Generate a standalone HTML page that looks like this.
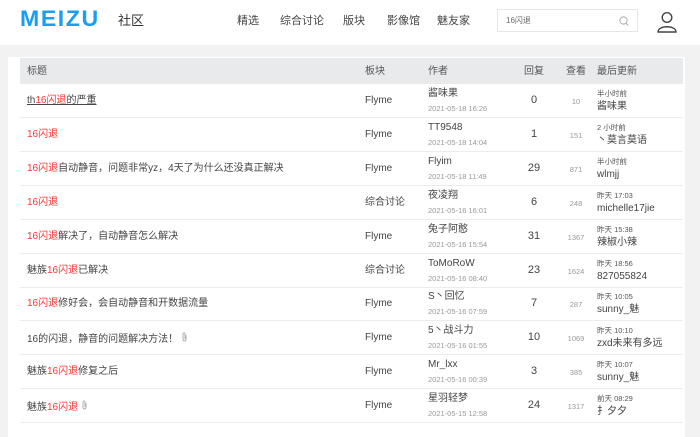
<!DOCTYPE html>
<html><head><meta charset="utf-8">
<style>
*{margin:0;padding:0;box-sizing:border-box}
body{width:700px;height:427px;overflow:hidden;background:#f2f2f2;font-family:"Liberation Sans","Noto Sans CJK SC",sans-serif;color:#333;position:relative;line-height:1.2}
.hd{position:absolute;left:0;top:0;width:700px;height:45px;background:#fff}
.logo{position:absolute;left:20px;top:8px;font-size:22px;line-height:22px;font-weight:bold;color:#1a9ef2;letter-spacing:1.5px;font-family:"Liberation Sans",sans-serif;transform:scaleX(1.05);transform-origin:left}
.she{position:absolute;left:118px;top:13px;font-size:13px;line-height:16px;color:#333}
.nav{position:absolute;top:14px;font-size:11px;line-height:14px;color:#444}
.search{position:absolute;left:497px;top:9px;width:141px;height:23px;border:1px solid #e6e6e6;background:#fff;font-size:8px;line-height:10px;color:#666;padding:6px 0 0 8px}
.box{position:absolute;left:8px;top:57px;width:677px;height:380px;background:#fff}
.th{position:absolute;left:20px;top:58px;width:663px;height:26px;background:#e8eaec;font-size:10px;color:#555}
.th>span,.r>span{position:absolute;line-height:12px;white-space:nowrap}
.r{position:absolute;left:20px;width:663px;height:34px;border-bottom:1px solid #ececec;font-size:10px;color:#444}
.t{left:7px;top:11px}
.red{color:#f33}
.b{left:345px;top:11px}
.a{left:408px;top:4px;font-size:10px}
.d{left:408px;top:19px;font-size:7.5px!important;color:#999}
.rp{left:494px;width:40px;text-align:center;top:10px;font-size:11px}
.v{left:536px;width:40px;text-align:center;top:12px;font-size:7.5px;color:#999}
.lt{left:577px;top:4px;font-size:7.5px;color:#555}
.lu{left:577px;top:17px;font-size:10px}
</style></head><body>
<div class="hd">
<div class="logo">MEIZU</div>
<div class="she">社区</div>
<div class="nav" style="left:237px">精选</div>
<div class="nav" style="left:280px">综合讨论</div>
<div class="nav" style="left:343px">版块</div>
<div class="nav" style="left:387px">影像馆</div>
<div class="nav" style="left:437px">魅友家</div>
<div class="search">16闪退
<svg style="position:absolute;right:8px;top:6px" width="10" height="11" viewBox="0 0 10 11"><circle cx="4.5" cy="4.5" r="3.6" fill="none" stroke="#aaa" stroke-width="1"/><line x1="7.2" y1="7.4" x2="9.2" y2="9.6" stroke="#aaa"/></svg></div>
<svg style="position:absolute;left:656px;top:11px" width="22" height="22" viewBox="0 0 22 22"><circle cx="11" cy="6.5" r="4.8" fill="none" stroke="#444" stroke-width="1.4"/><path d="M2 21 C2 14 20 14 20 21 Z" fill="none" stroke="#444" stroke-width="1.4"/></svg>
</div>
<div class="box"></div>
<div class="th"><span style="left:7px;top:8px">标题</span><span style="left:345px;top:8px">板块</span><span style="left:408px;top:8px">作者</span><span style="left:504px;top:8px">回复</span><span style="left:546px;top:8px">查看</span><span style="left:577px;top:8px">最后更新</span></div>

<div class="r" style="top:84px"><span class="t" style="text-decoration:underline">th<span class="red">16闪退</span>的严重</span><span class="b">Flyme</span><span class="a">酱味果</span><span class="d">2021-05-18 16:26</span><span class="rp">0</span><span class="v">10</span><span class="lt">半小时前</span><span class="lu">酱味果</span></div>
<div class="r" style="top:118px"><span class="t red">16闪退</span><span class="b">Flyme</span><span class="a">TT9548</span><span class="d">2021-05-18 14:04</span><span class="rp">1</span><span class="v">151</span><span class="lt">2 小时前</span><span class="lu">丶莫言莫语</span></div>
<div class="r" style="top:152px"><span class="t"><span class="red">16闪退</span>自动静音，问题非常yz，4天了为什么还没真正解决</span><span class="b">Flyme</span><span class="a">Flyim</span><span class="d">2021-05-18 11:49</span><span class="rp">29</span><span class="v">871</span><span class="lt">半小时前</span><span class="lu">wlmjj</span></div>
<div class="r" style="top:186px"><span class="t red">16闪退</span><span class="b">综合讨论</span><span class="a">夜凌翔</span><span class="d">2021-05-16 16:01</span><span class="rp">6</span><span class="v">248</span><span class="lt">昨天 17:03</span><span class="lu">michelle17jie</span></div>
<div class="r" style="top:220px"><span class="t"><span class="red">16闪退</span>解决了，自动静音怎么解决</span><span class="b">Flyme</span><span class="a">兔子阿憨</span><span class="d">2021-05-16 15:54</span><span class="rp">31</span><span class="v">1367</span><span class="lt">昨天 15:38</span><span class="lu">辣椒小辣</span></div>
<div class="r" style="top:254px"><span class="t">魅族<span class="red">16闪退</span>已解决</span><span class="b">综合讨论</span><span class="a">ToMoRoW</span><span class="d">2021-05-16 08:40</span><span class="rp">23</span><span class="v">1624</span><span class="lt">昨天 18:56</span><span class="lu">827055824</span></div>
<div class="r" style="top:287px"><span class="t"><span class="red">16闪退</span>修好会，会自动静音和开数据流量</span><span class="b">Flyme</span><span class="a">S丶回忆</span><span class="d">2021-05-16 07:59</span><span class="rp">7</span><span class="v">287</span><span class="lt">昨天 10:05</span><span class="lu">sunny_魅</span></div>
<div class="r" style="top:321px"><span class="t">16的闪退，静音的问题解决方法！ <svg width="7" height="10" viewBox="0 0 7 10"><path d="M5 3 V7.5 A1.5 1.5 0 0 1 2 7.5 V2 A1 1 0 0 1 4 2 V7" fill="none" stroke="#aaa" stroke-width="0.9"/></svg></span><span class="b">Flyme</span><span class="a">5丶战斗力</span><span class="d">2021-05-16 01:55</span><span class="rp">10</span><span class="v">1069</span><span class="lt">昨天 10:10</span><span class="lu">zxd未来有多远</span></div>
<div class="r" style="top:355px"><span class="t">魅族<span class="red">16闪退</span>修复之后</span><span class="b">Flyme</span><span class="a">Mr_lxx</span><span class="d">2021-05-16 00:39</span><span class="rp">3</span><span class="v">385</span><span class="lt">昨天 10:07</span><span class="lu">sunny_魅</span></div>
<div class="r" style="top:389px"><span class="t">魅族<span class="red">16闪退</span> <svg width="7" height="10" viewBox="0 0 7 10"><path d="M5 3 V7.5 A1.5 1.5 0 0 1 2 7.5 V2 A1 1 0 0 1 4 2 V7" fill="none" stroke="#aaa" stroke-width="0.9"/></svg></span><span class="b">Flyme</span><span class="a">星羽轻梦</span><span class="d">2021-05-15 12:58</span><span class="rp">24</span><span class="v">1317</span><span class="lt">前天 08:29</span><span class="lu">扌夕夕</span></div>
</body></html>
